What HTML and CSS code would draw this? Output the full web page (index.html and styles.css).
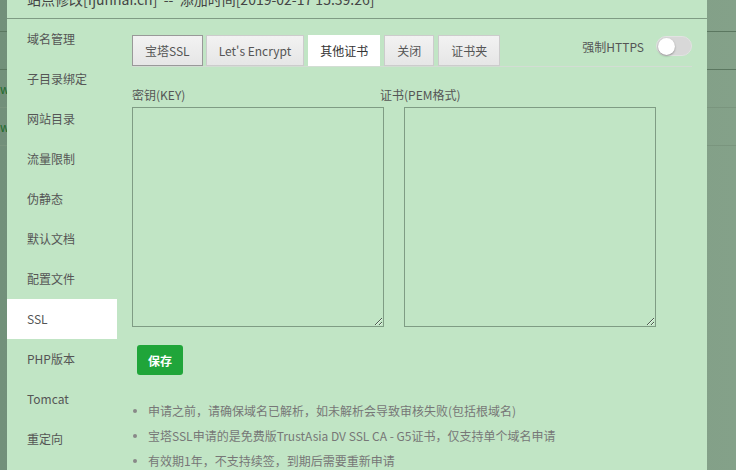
FILE: index.html
```html
<!DOCTYPE html>
<html lang="zh-CN">
<head>
    <meta charset="UTF-8">
    <meta name="viewport" content="width=device-width, initial-scale=1.0">
    <title>站点修改</title>
    <link rel="stylesheet" href="styles.css">
</head>
<body>

    <!-- site list behind the shade -->
    <div class="site-list">
        <div class="list-bar"></div>
        <div class="list-head"></div>
        <div class="list-row"><a href="#">w</a></div>
        <div class="list-row"><a href="#">w</a></div>
    </div>

    <!-- edit dialog -->
    <div class="layer">
        <div class="layer-title">站点修改[fjunhai.cn] &nbsp;--&nbsp; 添加时间[2019-02-17 15:39:26]</div>
        <div class="layer-body">
            <ul class="side-menu">
                <li>域名管理</li>
                <li>子目录绑定</li>
                <li>网站目录</li>
                <li>流量限制</li>
                <li>伪静态</li>
                <li>默认文档</li>
                <li>配置文件</li>
                <li class="active">SSL</li>
                <li>PHP版本</li>
                <li>Tomcat</li>
                <li>重定向</li>
            </ul>

            <div class="ssl-panel">
                <div class="tab-bar">
                    <span class="tab focus">宝塔SSL</span>
                    <span class="tab">Let's Encrypt</span>
                    <span class="tab on">其他证书</span>
                    <span class="tab">关闭</span>
                    <span class="tab">证书夹</span>
                    <div class="force-https">
                        <span>强制HTTPS</span>
                        <span class="switch"><span class="knob"></span></span>
                    </div>
                </div>

                <div class="key-row">
                    <label for="key">密钥(KEY)</label>
                    <label for="csr" class="second">证书(PEM格式)</label>
                    <textarea id="key"></textarea>
                    <textarea id="csr"></textarea>
                </div>

                <button class="btn-save">保存</button>

                <ul class="tips">
                    <li>申请之前，请确保域名已解析，如未解析会导致审核失败(包括根域名)</li>
                    <li>宝塔SSL申请的是免费版TrustAsia DV SSL CA - G5证书，仅支持单个域名申请</li>
                    <li>有效期1年，不支持续签，到期后需要重新申请</li>
                </ul>
            </div>
        </div>
    </div>

</body>
</html>
```

FILE: styles.css
```css
* {
    box-sizing: border-box;
}

html, body {
    margin: 0;
    height: 100%;
}

body {
    font-family: "Noto Sans CJK SC", "Noto Sans", sans-serif;
    font-size: 12px;
    color: #555;
    background: linear-gradient(to right, #72907a, #84a189);
    overflow: hidden;
    position: relative;
}

/* page behind the shade */
.list-bar {
    height: 32px;
    border-bottom: 1px solid #5b7760;
}

.list-head {
    height: 38px;
    border-bottom: 1px solid #5b7760;
}

.list-row {
    height: 38px;
    line-height: 37px;
    border-bottom: 1px solid #7a957e;
}

.list-row a {
    color: #1e6b2c;
    text-decoration: none;
    margin-left: 0;
}

/* dialog */
.layer {
    position: absolute;
    left: 7px;
    top: -24px;
    width: 700px;
    height: 520px;
    background: #c1e5c5;
}

.layer-title {
    height: 43px;
    padding: 4px 20px 0;
    line-height: 38px;
    font-size: 14px;
    color: #444;
    border-bottom: 1px solid #7f9c84;
    white-space: nowrap;
}

.layer-body {
    display: flex;
}

.side-menu {
    width: 110px;
    margin: 0;
    padding: 0;
    list-style: none;
}

.side-menu li {
    height: 40px;
    line-height: 40px;
    padding-left: 20px;
}

.side-menu li.active {
    background: #fff;
}

.ssl-panel {
    flex: 1;
    padding: 16px 15px 0;
}

/* tabs */
.tab-bar {
    display: flex;
    align-items: flex-start;
    height: 32px;
    border-bottom: 1px solid #d3ddd4;
}

.tab {
    height: 31px;
    line-height: 29px;
    padding: 0 12px;
    margin-right: 4px;
    border: 1px solid #ccc;
    background: linear-gradient(#f2f2f2, #e6e6e6);
    color: #555;
    white-space: nowrap;
}

.tab.focus {
    border-color: #999;
    margin-right: 3px;
}

.tab.on {
    background: #fff;
    border-color: #fff;
    color: #333;
    padding: 0 11px;
}

.force-https {
    margin-left: auto;
    height: 22px;
    display: flex;
    align-items: center;
}

.switch {
    width: 36px;
    height: 20px;
    margin-left: 12px;
    padding: 1px;
    border: 1px solid #e2e2e2;
    border-radius: 10px;
    background: #d8d8d8;
    display: flex;
    align-items: center;
}

.knob {
    width: 17px;
    height: 17px;
    border-radius: 50%;
    background: #fff;
    box-shadow: 0 1px 2px rgba(0, 0, 0, 0.35);
}

/* key / certificate */
.key-row {
    display: grid;
    grid-template-columns: 252px 252px;
    column-gap: 20px;
    row-gap: 3px;
    margin-top: 19px;
}

.key-row label {
    line-height: 18px;
    white-space: nowrap;
}

.key-row label.second {
    margin-left: -24px;
}

.key-row textarea {
    width: 252px;
    height: 220px;
    border: 1px solid #7f9c84;
    background: transparent;
    font-family: "Liberation Mono", monospace;
    font-size: 12px;
    padding: 5px;
}

.btn-save {
    display: block;
    margin: 18px 0 0 5px;
    height: 30px;
    padding: 0 11px;
    border: none;
    border-radius: 3px;
    background: #20a53a;
    color: #fff;
    font-family: inherit;
    font-size: 12px;
    font-weight: bold;
}

.tips {
    margin: 23px 0 0;
    padding: 0 0 0 1px;
    list-style: none;
    color: #777;
}

.tips li {
    display: flex;
    align-items: center;
    height: 25px;
    white-space: nowrap;
}

.tips li::before {
    content: "";
    width: 4px;
    height: 4px;
    border-radius: 50%;
    background: #888;
    margin-right: 11px;
}
```
